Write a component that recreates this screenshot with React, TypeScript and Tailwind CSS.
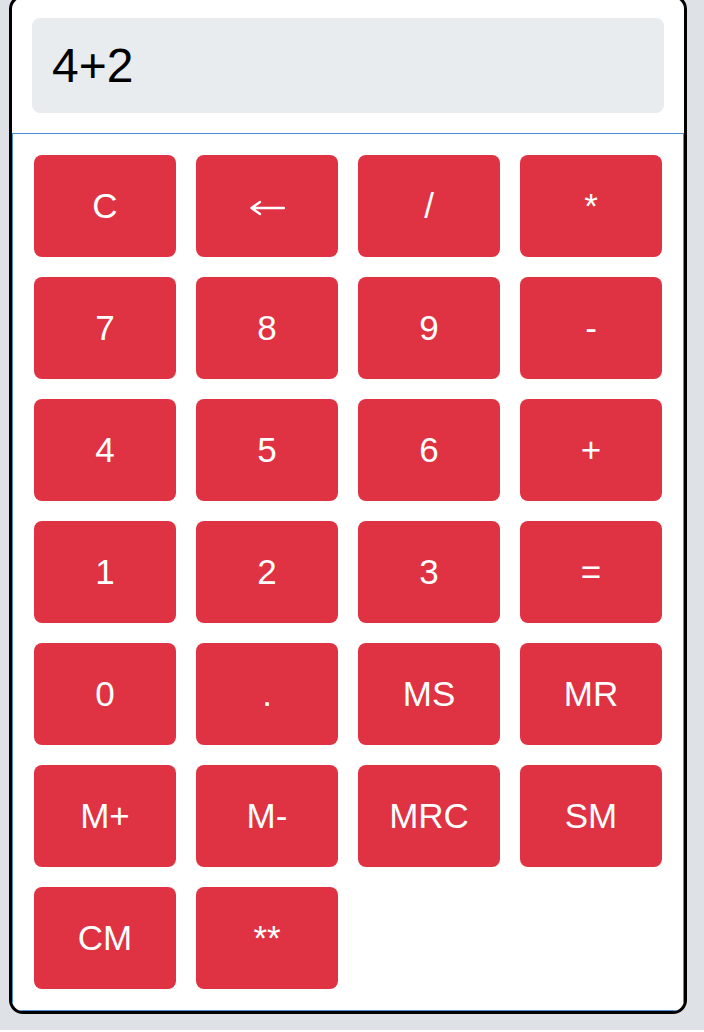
const keys = [
  "C", "←", "/", "*",
  "7", "8", "9", "-",
  "4", "5", "6", "+",
  "1", "2", "3", "=",
  "0", ".", "MS", "MR",
  "M+", "M-", "MRC", "SM",
  "CM", "**",
];

function BackArrow() {
  return (
    <svg width="36" height="16" viewBox="0 0 36 16" className="mt-1" aria-label="←">
      <path
        d="M2.5 8H35M11 2L2.5 8L11 14"
        fill="none"
        stroke="white"
        strokeWidth="2.4"
        strokeLinecap="round"
        strokeLinejoin="round"
      />
    </svg>
  );
}

export default function App() {
  return (
    <div
      className="min-h-screen bg-[#dee2e6] pb-4"
      style={{ fontFamily: '"Liberation Sans", Arial, sans-serif' }}
    >
      <div className="ml-[9px] -mt-[5px] w-[678px] overflow-hidden rounded-[14px] border-[3px] border-black bg-white">
        {/* display */}
        <div className="p-5">
          <div className="rounded-lg bg-[#e9ecef] px-5 py-5 text-[48px] leading-[55px] text-black">
            4+2
          </div>
        </div>

        {/* keypad */}
        <div className="grid grid-cols-4 gap-5 border border-[#4a8fd4] p-[21px]">
          {keys.map((k) => (
            <button
              key={k}
              type="button"
              className="flex h-[102px] items-center justify-center rounded-lg bg-[#df3242] text-[35px] text-white"
            >
              {k === "←" ? <BackArrow /> : k}
            </button>
          ))}
        </div>
      </div>
    </div>
  );
}
